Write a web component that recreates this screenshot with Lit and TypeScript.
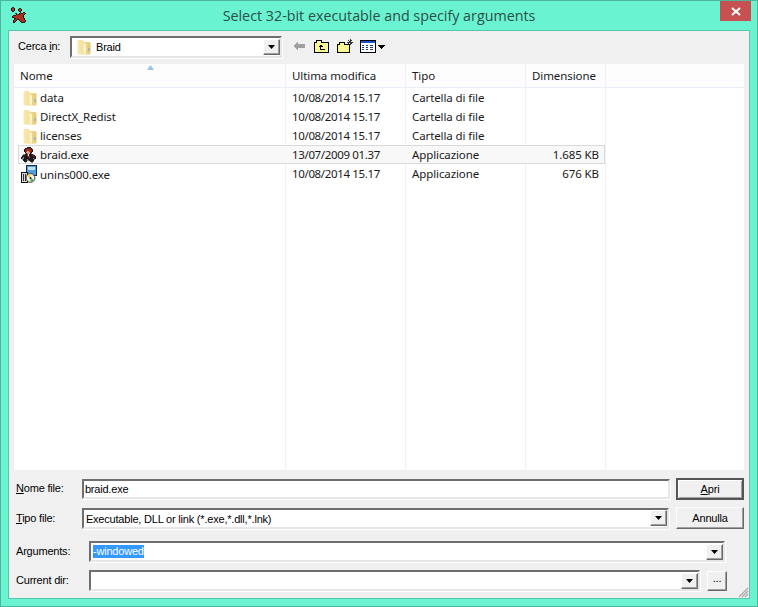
import { LitElement, html, css, svg } from "lit";
import { customElement } from "lit/decorators.js";

const SPLAT = [
  "..kk............",
  ".krrk....kk.....",
  ".krrk...krrk....",
  ".krrk...krrk....",
  "..kk.....kk.....",
  "..........k..kk.",
  ".....kk..krkkrrk",
  "......krkkrrrrk.",
  "...kkkrrrrrrrk..",
  "..krrrrrrrrrrk..",
  "..kkrrrrrrrrrk..",
  "....kkrrrrrrrrk.",
  "....krrkkrrrrrk.",
  "...krrk..krrrrrk",
  "...krk....krrrrk",
  "...kk......kkkk.",
];
const BRAID = [
  "......kkkk......",
  "....kkddddk.....",
  "...kddrrrddk....",
  "...kdrrrrrdk....",
  "...kdrssrrdk....",
  "....kssssdk.....",
  "....gkssskg.....",
  "..ggkkrwkkkkg...",
  ".gkkkkrwkkkddk..",
  ".kkkkkkrrkkkddk.",
  "kkgkkkkkrkkkkkk.",
  "kggkkkkkkkkkgkk.",
  ".gkkkkgkkkkkkg..",
  "..kkkkggkkkkk...",
  "...kkk...kkkg...",
  "....g.....gg....",
];
const COLORS: Record<string, string> = {
  k: "#1c1a1c", r: "#a8321f", d: "#6e2418", s: "#d9a080", w: "#e8e8e8", g: "#8a8a8a",
};

function pixels(grid: string[]) {
  return grid.flatMap((row, y) =>
    [...row].map((c, x) =>
      c === "." ? null : svg`<rect x=${x} y=${y} width="1" height="1" fill=${COLORS[c]}></rect>`
    )
  );
}

const folder = html`<svg class="folder" width="14" height="16" viewBox="0 0 14 16">
  <defs><linearGradient id="fg" x1="0" x2="1" y1="0" y2="0">
    <stop offset="0" stop-color="#f8e9b0"></stop><stop offset=".6" stop-color="#f3dc92"></stop><stop offset="1" stop-color="#e5c670"></stop>
  </linearGradient></defs>
  <path d="M0.5 2.5 Q0.5 1 2 1 H5 Q6.5 1 6.5 2.5 V3 H12 Q13.5 3 13.5 4.5 V14 Q13.5 15.5 12 15.5 H2 Q0.5 15.5 0.5 14Z" fill="url(#fg)"></path>
  <path d="M6.5 3 V14 L9.5 15.5 V5.5 Z" fill="#fcf3c8"></path>
  <path d="M6.5 3 L9.5 5.5 V15.5" fill="none" stroke="#d9bd78" stroke-width=".5"></path>
  <rect x="11.5" y="9" width="1" height="3" fill="#6ea6d8"></rect>
</svg>`;

const rows = [
  ["folder", "data", "10/08/2014 15.17", "Cartella di file", ""],
  ["folder", "DirectX_Redist", "10/08/2014 15.17", "Cartella di file", ""],
  ["folder", "licenses", "10/08/2014 15.17", "Cartella di file", ""],
  ["braid", "braid.exe", "13/07/2009 01.37", "Applicazione", "1.685 KB"],
  ["unins", "unins000.exe", "10/08/2014 15.17", "Applicazione", "676 KB"],
];

const arrow = html`<svg width="7" height="4" viewBox="0 0 7 4"><path d="M0 0H7L3.5 4Z" fill="#000"></path></svg>`;

@customElement("app-root")
export class AppRoot extends LitElement {
  static styles = css`
    :host { display: block; width: 758px; height: 607px; overflow: hidden; font-family: "Noto Sans", sans-serif; }
    * { box-sizing: border-box; }
    .window {
      position: relative; width: 758px; height: 607px; background: #6af3d0;
      border: 1px solid #4fb49c; display: flex; flex-direction: column;
    }
    .titlebar { height: 29px; flex: none; display: flex; align-items: flex-start; position: relative; }
    .app-icon { position: absolute; left: 9px; top: 6px; }
    .title {
      flex: 1; text-align: center; font-family: "Open Sans", sans-serif; font-size: 14.3px; line-height: 29px;
      color: #2a4f48;
    }
    .close {
      position: absolute; left: 719px; top: 0; width: 31px; height: 20px; background: #c75050;
      display: flex; align-items: center; justify-content: center;
    }
    .client {
      margin: 0 7px 7px 7px; flex: 1; background: #f0f0f0; border: 1px solid #55c8ac;
      display: flex; flex-direction: column; padding: 5px 5px 0 5px; position: relative;
    }
    .toolbar { height: 22px; display: flex; align-items: center; flex: none; margin-left: 4px; }
    .lbl { font-family: "Liberation Sans", sans-serif; font-size: 11px; letter-spacing: -0.2px; color: #000; white-space: nowrap; margin-top: -2px; }
    .lbl.tipo { margin-top: 0; }
    .lbl u { text-decoration-thickness: 1px; }
    .cerca { width: 52px; }
    .combo, .edit {
      height: 21px; background: #fff; border: 2px solid; border-color: #6e6e6e #e6e6e6 #e6e6e6 #6e6e6e;
      box-shadow: 1px 1px 0 #fff; display: flex; align-items: center; font-family: "Liberation Sans", sans-serif; font-size: 11px; letter-spacing: -0.2px; color: #000;
    }
    .combo .val { flex: 1; padding-left: 2px; white-space: nowrap; display: flex; align-items: center; }
    .combo.lower .val { padding-top: 1px; }
    .drop {
      width: 17px; height: 16px; flex: none; background: #f0f0f0; border: 1px solid; border-color: #fff #696969 #696969 #fff;
      display: flex; align-items: center; justify-content: center; box-shadow: inset -1px -1px 0 #a0a0a0;
    }
    .look { width: 212px; height: 22px; }
    .look .val { padding-left: 5px; gap: 5px; }
    .tools { display: flex; align-items: center; margin-left: 10px; margin-top: -2px; }
    .list {
      margin-top: 6px; height: 406px; flex: none; background-color: #fff; position: relative;
      background-image: linear-gradient(#f0f0f5, #f0f0f5), linear-gradient(#f0f0f5, #f0f0f5), linear-gradient(#f0f0f5, #f0f0f5), linear-gradient(#f0f0f5, #f0f0f5);
      background-size: 1px 100%; background-repeat: no-repeat;
      background-position: 271px 0, 391px 0, 511px 0, 591px 0;
    }
    .grid { display: grid; grid-template-columns: 271px 120px 120px 80px 1fr; }
    .head { height: 24px; border-bottom: 1px solid #e8eef6; font-size: 11.5px; letter-spacing: -0.08px; color: #1a1a1a; }
    .head > div { padding: 3px 0 0 6px; line-height: 18px; background: #fdfdfd; height: 23px; }
    .head > div + div { border-left: 1px solid #eef1f6; }
    .sort { position: absolute; left: 133px; top: 1px; }
    .row { height: 19px; font-size: 11.5px; letter-spacing: -0.1px; color: #1a1a1a; border: 1px solid transparent; margin-left: 4px; width: 587px; grid-template-columns: 266px 120px 120px 80px; white-space: nowrap; line-height: 17px; }
    .row.sel { background: #f8f8f8; border-color: #d9d9d9; }
    .row > div { padding-left: 7px; }
    .row > .name { display: flex; align-items: center; padding-left: 0; gap: 3px; }
    .row > .size { text-align: right; padding: 0 6px 0 0; }
    .row > .date { letter-spacing: -0.35px; }
    .ico { width: 18px; display: flex; justify-content: flex-end; flex: none; }
    .form { display: flex; flex-direction: column; margin-top: 8px; padding-left: 2px; }
    .frow { display: flex; align-items: center; flex: none; }
    .wide { width: 66px; }
    .wider { width: 73px; }
    .edit { padding: 0 0 1px 1px; }
    .btn {
      width: 68px; background: #f0f0f0; border: 1px solid; border-color: #fff #696969 #696969 #fff;
      box-shadow: inset -1px -1px 0 #a0a0a0; font-family: "Liberation Sans", sans-serif; font-size: 11px; letter-spacing: -0.2px; color: #000;
      display: flex; align-items: center; justify-content: center; flex: none;
    }
    .btn.def { border: 2px solid #555; box-shadow: inset 1px 1px 0 #fff, inset -1px -1px 0 #a0a0a0; }
    .sel-text { background: #3399ff; color: #fff; line-height: 13px; padding: 0; }
    .dots { width: 20px; height: 20px; margin-left: 7px; padding-bottom: 6px; }
    .grip { position: absolute; right: 0; bottom: 0; }
  `;

  private combo(value: unknown, width: number, cls = "") {
    return html`<div class="combo ${cls}" style="width:${width}px"><div class="val">${value}</div><div class="drop">${arrow}</div></div>`;
  }

  render() {
    return html`<div class="window">
      <div class="titlebar">
        <svg class="app-icon" width="16" height="16" viewBox="0 0 16 16" shape-rendering="crispEdges">${pixels(SPLAT)}</svg>
        <div class="title">Select 32-bit executable and specify arguments</div>
        <div class="close"><svg width="10" height="9" viewBox="0 0 10 9"><path d="M1 1L9 8M9 1L1 8" stroke="#fff" stroke-width="2"></path></svg></div>
      </div>
      <div class="client">
        <div class="toolbar">
          <div class="lbl cerca">Cerca <u>i</u>n:</div>
          <div class="combo look"><div class="val">${folder}<span>Braid</span></div><div class="drop">${arrow}</div></div>
          <div class="tools">
            <svg width="96" height="18" viewBox="0 0 96 18" shape-rendering="crispEdges">
              <defs><pattern id="dither" width="2" height="2" patternUnits="userSpaceOnUse">
                <rect width="2" height="2" fill="#ffff66"></rect><rect width="1" height="1" fill="#f0f0c0"></rect><rect x="1" y="1" width="1" height="1" fill="#f0f0c0"></rect>
              </pattern></defs>
              <path d="M1 9L6 5V7H13V11H6V13Z" fill="#a0a0a0"></path>
              <path d="M22.5 15.5V5.5H24V3.5H29V5.5H36.5V15.5Z" fill="url(#dither)" stroke="#000"></path>
              <path d="M29 7L26 10H28V13H33V12H29V10H31Z" fill="#000"></path>
              <path d="M45.5 15.5V7.5H47V5.5H52V7.5H57.5V15.5Z" fill="url(#dither)" stroke="#000"></path>
              <path d="M58 2V8M55 5H61M56 3L60 7M60 3L56 7" stroke="#333" stroke-width="1"></path>
              <rect x="68.5" y="3.5" width="15" height="12" fill="#fff" stroke="#000"></rect>
              <rect x="69" y="4" width="14" height="2" fill="#1c50c8"></rect>
              <path d="M70 8h2v1h-2zM74 8h2v1h-2zM78 8h3v1h-3zM70 10h2v1h-2zM74 10h2v1h-2zM78 10h3v1h-3zM70 12h2v1h-2zM74 12h2v1h-2zM78 12h3v1h-3z" fill="#1c3c90"></path>
              <path d="M86 8H93L89.5 12Z" fill="#000"></path>
            </svg>
          </div>
        </div>
        <div class="list">
          <div class="grid head">
            <div>Nome</div><div>Ultima modifica</div><div>Tipo</div><div>Dimensione</div><div></div>
          </div>
          <svg class="sort" width="7" height="5" viewBox="0 0 7 5"><path d="M0 5L3.5 0L7 5Z" fill="#9cc4e0"></path></svg>
          ${rows.map(([icon, name, date, type, size], i) => html`
            <div class="grid row ${i === 3 ? "sel" : ""}">
              <div class="name"><span class="ico">${icon === "folder" ? folder
                : icon === "braid" ? html`<svg width="16" height="16" viewBox="0 0 16 16" shape-rendering="crispEdges">${pixels(BRAID)}</svg>`
                : html`<svg width="16" height="18" viewBox="0 0 16 18">
                    <rect x="5.5" y="0.5" width="10" height="10" fill="#4f9fd8" stroke="#14264a"></rect>
                    <rect x="7" y="2" width="7" height="3" fill="#bfe0f8"></rect>
                    <rect x="0.5" y="7.5" width="6" height="10" fill="#d8d8d8" stroke="#111"></rect>
                    <path d="M2.5 9V16M4.5 9V16" stroke="#333"></path>
                    <circle cx="9.5" cy="13" r="4.4" fill="#f4f4f4" stroke="#222" stroke-width=".8"></circle>
                    <path d="M9.5 13L6 11A4 4 0 0 1 9.5 9Z" fill="#f0d040"></path>
                    <path d="M9.5 13L13 15A4 4 0 0 1 9.5 17Z" fill="#48b040"></path>
                    <circle cx="9.5" cy="13" r="1" fill="#222"></circle>
                  </svg>`}</span><span>${name}</span></div>
              <div class="date">${date}</div><div>${type}</div><div class="size">${size}</div>
            </div>`)}
        </div>
        <div class="form">
          <div class="frow" style="height:22px">
            <div class="lbl wide"><u>N</u>ome file:</div>
            <div class="edit" style="width:589px;height:20px">braid.exe</div>
            <div style="width:6px"></div>
            <div class="btn def" style="height:22px"><span><u>A</u>pri</span></div>
          </div>
          <div class="frow" style="height:22px;margin-top:7px">
            <div class="lbl wide tipo"><u>T</u>ipo file:</div>
            ${this.combo("Executable, DLL or link (*.exe,*.dll,*.lnk)", 588, "lower")}
            <div style="width:7px"></div>
            <div class="btn" style="height:22px">Annulla</div>
          </div>
          <div class="frow" style="height:21px;margin-top:12px">
            <div class="lbl wider">Arguments:</div>
            ${this.combo(html`<span class="sel-text">-windowed</span>`, 636)}
          </div>
          <div class="frow" style="height:21px;margin-top:8px">
            <div class="lbl wider">Current dir:</div>
            ${this.combo("", 611)}
            <div class="btn dots">...</div>
          </div>
        </div>
        <svg class="grip" width="11" height="11" viewBox="0 0 11 11"><path d="M10 1L1 10M10 4L4 10M10 7L7 10" stroke="#a8a8a8" stroke-width="1.2"></path></svg>
      </div>
    </div>`;
  }
}
